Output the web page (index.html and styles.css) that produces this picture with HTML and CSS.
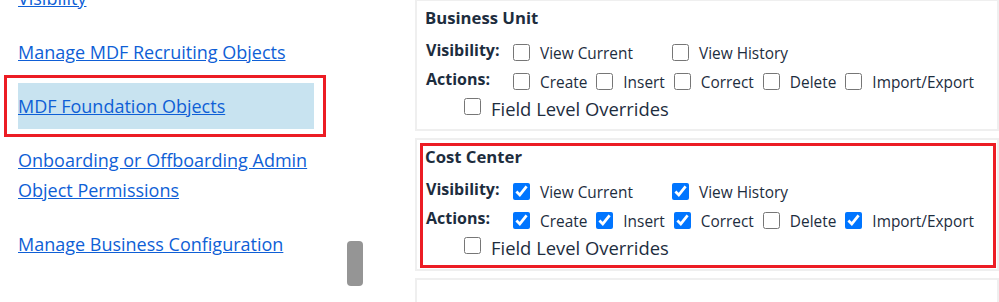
FILE: index.html
```html
<!DOCTYPE html>
<html lang="en">
<head>
  <meta charset="UTF-8" />
  <title>Permission Settings</title>
  <link rel="stylesheet" href="styles.css">
</head>
<body>

  <nav class="side">
    <a class="nav-link" href="#">Visibility</a>
    <a class="nav-link" href="#">Manage MDF Recruiting Objects</a>
    <div class="mark mark-nav">
      <a class="nav-link selected" href="#">MDF Foundation Objects</a>
    </div>
    <a class="nav-link" href="#">Onboarding or Offboarding Admin Object Permissions</a>
    <a class="nav-link" href="#">Manage Business Configuration</a>
  </nav>

  <div class="scroll-track">
    <div class="scroll-thumb"></div>
  </div>

  <main class="cards">

    <section class="card">
      <h3>Business Unit</h3>
      <div class="perm-row">
        <span class="row-label">Visibility:</span>
        <label class="opt opt-wide"><input type="checkbox"> View Current</label>
        <label class="opt"><input type="checkbox"> View History</label>
      </div>
      <div class="perm-row">
        <span class="row-label">Actions:</span>
        <label class="opt"><input type="checkbox"> Create</label>
        <label class="opt"><input type="checkbox"> Insert</label>
        <label class="opt"><input type="checkbox"> Correct</label>
        <label class="opt"><input type="checkbox"> Delete</label>
        <label class="opt"><input type="checkbox"> Import/Export</label>
      </div>
      <div class="perm-row field-row">
        <label class="opt"><input type="checkbox"> Field Level Overrides</label>
      </div>
    </section>

    <section class="card card-marked">
      <div class="mark mark-card">
        <h3>Cost Center</h3>
        <div class="perm-row">
          <span class="row-label">Visibility:</span>
          <label class="opt opt-wide"><input type="checkbox" checked> View Current</label>
          <label class="opt"><input type="checkbox" checked> View History</label>
        </div>
        <div class="perm-row">
          <span class="row-label">Actions:</span>
          <label class="opt"><input type="checkbox" checked> Create</label>
          <label class="opt"><input type="checkbox" checked> Insert</label>
          <label class="opt"><input type="checkbox" checked> Correct</label>
          <label class="opt"><input type="checkbox"> Delete</label>
          <label class="opt"><input type="checkbox" checked> Import/Export</label>
        </div>
        <div class="perm-row field-row">
          <label class="opt"><input type="checkbox"> Field Level Overrides</label>
        </div>
      </div>
    </section>

    <section class="card card-empty"></section>

  </main>

</body>
</html>
```

FILE: styles.css
```css
* {
  margin: 0;
  padding: 0;
  box-sizing: border-box;
  font-family: "Open Sans", sans-serif;
}

body {
  display: flex;
  height: 100vh;
  overflow: hidden;
  background: #fff;
  color: #1d2d3e;
}

/* left navigation */

.side {
  flex-shrink: 0;
  width: 347px;
  padding-left: 18px;
  margin-top: -25px;
  display: flex;
  flex-direction: column;
  align-items: flex-start;
  gap: 8px;
}

.nav-link {
  display: block;
  width: 296px;
  padding: 8px 0;
  font-size: 18px;
  line-height: 30px;
  color: #0f5fd6;
  text-decoration: underline;
}

.nav-link.selected {
  background: #c8e3f0;
}

.mark {
  border: 3px solid #ec1c24;
}

.mark-nav {
  margin: -8px 0 -8px -14px;
  padding: 5px 9px 5px 11px;
}

.scroll-track {
  flex-shrink: 0;
  width: 16px;
}

.scroll-thumb {
  margin-top: 241px;
  height: 45px;
  background: #959595;
  border-radius: 4px;
}

/* permission cards */

.cards {
  flex: 1;
  min-width: 0;
  margin-left: 52px;
  margin-top: -1px;
  display: flex;
  flex-direction: column;
  gap: 7px;
}

.card {
  flex-shrink: 0;
  border: 2px solid #efefef;
  padding: 6px 8px 4px 8px;
}

.card-marked {
  padding: 3px 1px 1px 3px;
}

.card-empty {
  height: 24px;
  border-bottom: none;
}

.mark-card {
  padding: 0 0 1px 2px;
}

.card h3 {
  font-size: 16.7px;
  line-height: 22px;
  font-weight: 700;
  margin-bottom: 10px;
}

.perm-row {
  display: flex;
  align-items: center;
  height: 29px;
  font-size: 15.4px;
}

.row-label {
  width: 88px;
  align-self: flex-start;
  font-weight: 700;
  font-size: 16px;
  line-height: 22px;
  padding-left: 1px;
}

.opt {
  display: flex;
  align-items: center;
  margin-right: 9px;
  white-space: nowrap;
}

.opt input {
  width: 17px;
  height: 17px;
  margin: 0 10px 3px 0;
}

.opt-wide {
  width: 159px;
  margin-right: 0;
}

.field-row {
  height: 28px;
  margin: -3px 0 3px;
  padding-left: 39px;
  font-size: 18.4px;
}
```
